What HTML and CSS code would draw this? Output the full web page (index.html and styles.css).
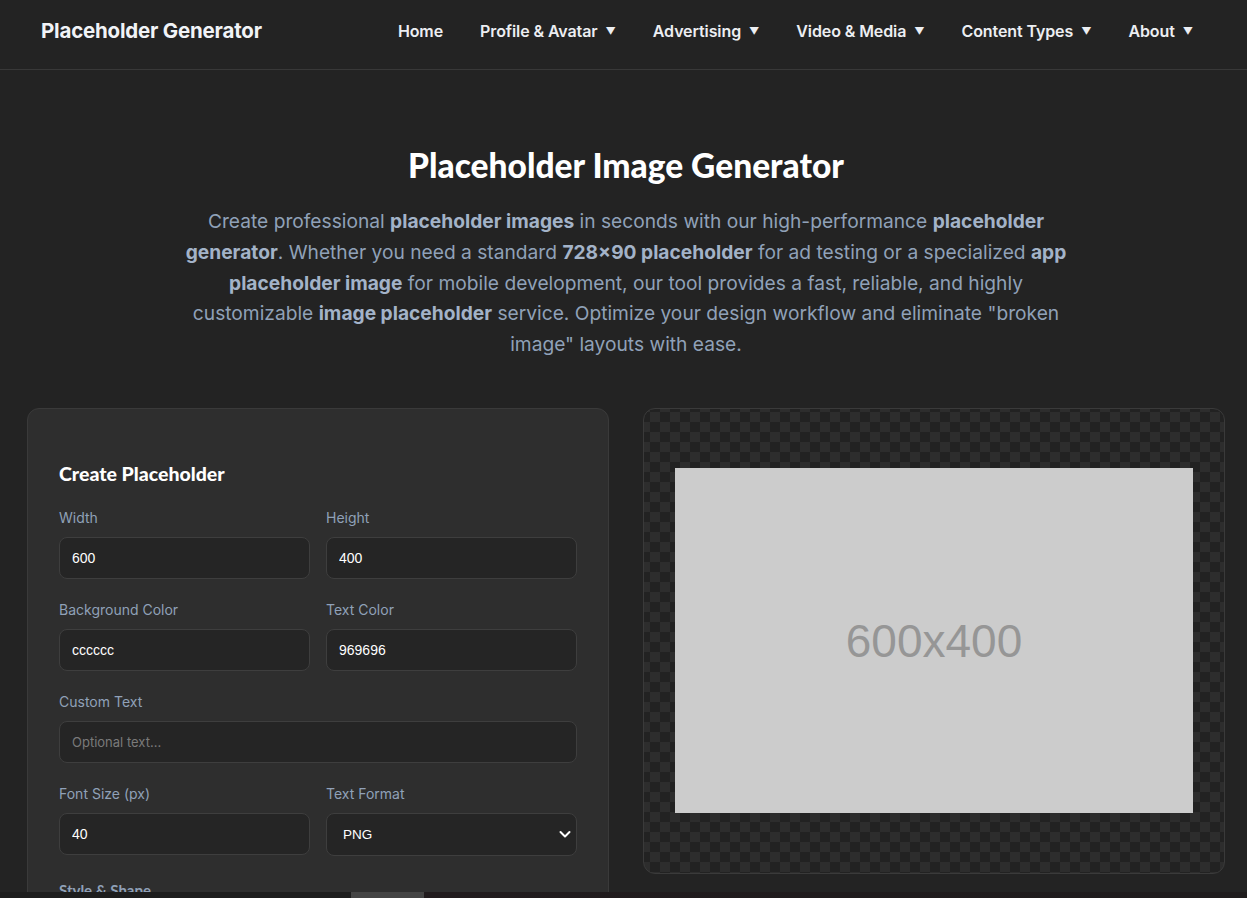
FILE: index.html
```html
<!DOCTYPE html>
<html lang="en">
<head>
<meta charset="utf-8">
<title>Placeholder Image Generator</title>
<link rel="stylesheet" href="styles.css">
</head>
<body>
<header class="site-header">
  <a class="logo" href="#">Placeholder Generator</a>
  <nav class="nav">
    <a class="nav-item" href="#">Home</a>
    <a class="nav-item" href="#">Profile &amp; Avatar <span class="caret">▼</span></a>
    <a class="nav-item" href="#">Advertising <span class="caret">▼</span></a>
    <a class="nav-item" href="#">Video &amp; Media <span class="caret">▼</span></a>
    <a class="nav-item" href="#">Content Types <span class="caret">▼</span></a>
    <a class="nav-item" href="#">About <span class="caret">▼</span></a>
  </nav>
</header>

<main class="main">
  <section class="hero">
    <h1 class="hero-title">Placeholder Image Generator</h1>
    <p class="hero-text">Create professional <strong>placeholder images</strong> in seconds with our high-performance <strong>placeholder generator</strong>. Whether you need a standard <strong>728×90 placeholder</strong> for ad testing or a specialized <strong>app placeholder image</strong> for mobile development, our tool provides a fast, reliable, and highly customizable <strong>image placeholder</strong> service. Optimize your design workflow and eliminate "broken image" layouts with ease.</p>
  </section>

  <section class="tool">
    <div class="card form-card">
      <h2 class="card-title">Create Placeholder</h2>
      <div class="row two">
        <div class="field">
          <label class="label">Width</label>
          <input class="input" type="text" value="600">
        </div>
        <div class="field">
          <label class="label">Height</label>
          <input class="input" type="text" value="400">
        </div>
      </div>
      <div class="row two">
        <div class="field">
          <label class="label">Background Color</label>
          <input class="input" type="text" value="cccccc">
        </div>
        <div class="field">
          <label class="label">Text Color</label>
          <input class="input" type="text" value="969696">
        </div>
      </div>
      <div class="row">
        <div class="field">
          <label class="label">Custom Text</label>
          <input class="input" type="text" placeholder="Optional text...">
        </div>
      </div>
      <div class="row two">
        <div class="field">
          <label class="label">Font Size (px)</label>
          <input class="input" type="text" value="40">
        </div>
        <div class="field">
          <label class="label">Text Format</label>
          <div class="select">
            <span>PNG</span>
            <svg class="chev" width="14" height="14" viewBox="0 0 14 14"><path d="M2.5 5l4.5 4.5L11.5 5" fill="none" stroke="#fff" stroke-width="2" stroke-linecap="round" stroke-linejoin="round"/></svg>
          </div>
        </div>
      </div>
      <h3 class="section-label">Style &amp; Shape</h3>
      <div class="row two">
        <div class="field">
          <label class="label">Border Radius</label>
          <input class="input" type="text" value="0">
        </div>
        <div class="field">
          <label class="label">Shape</label>
          <input class="input" type="text" value="Rectangle">
        </div>
      </div>
    </div>

    <div class="card preview-card">
      <div class="preview-img"><span>600x400</span></div>
    </div>
  </section>
</main>

<div class="bottom-bar"></div>
</body>
</html>
```

FILE: styles.css
```css
* { box-sizing: border-box; }
html, body { margin: 0; padding: 0; }
body {
  background: #232323;
  color: #e5e7eb;
  font-family: Inter, "Liberation Sans", sans-serif;
  overflow: hidden;
  height: 898px;
}
a { text-decoration: none; color: inherit; }

.site-header {
  height: 70px;
  border-bottom: 1px solid #383838;
  display: flex;
  align-items: center;
  justify-content: space-between;
  padding: 0 54px 8px 41px;
}
.logo {
  font-size: 20.5px;
  font-weight: 700;
  color: #f1f3f7;
  letter-spacing: -0.2px;
}
.nav {
  display: flex;
  align-items: center;
  gap: 37px;
}
.nav-item {
  font-size: 16px;
  font-weight: 600;
  color: #eceef2;
  display: flex;
  align-items: center;
  gap: 8px;
  letter-spacing: -0.1px;
}
.caret { font-size: 10px; }

.main { padding: 0 0 0 27px; }

.hero {
  text-align: center;
  padding-top: 75px;
  padding-right: 22px;
}
.hero-title {
  margin: 0;
  font-family: Lato, Inter, sans-serif;
  font-weight: 900;
  font-size: 33.5px;
  color: #ffffff;
  line-height: 40px;
}
.hero-text {
  max-width: 900px;
  margin: 21px auto 0;
  font-size: 19.2px;
  line-height: 30.8px;
  color: #90a1b8;
}
.hero-text strong { color: #a3b3c8; font-weight: 700; }

.tool {
  display: grid;
  grid-template-columns: 582px 582px;
  gap: 34px;
  margin-top: 48px;
  align-items: start;
}
.card {
  border: 1px solid #3a3a3a;
  border-radius: 12px;
}
.form-card {
  background: #2e2e2e;
  padding: 51px 31px 32px;
}
.card-title {
  margin: 0 0 20px;
  font-family: Lato, Inter, sans-serif;
  font-weight: 900;
  font-size: 19.5px;
  color: #ffffff;
  line-height: 28px;
}
.row { display: grid; gap: 16px; margin-bottom: 21px; }
.row.two { grid-template-columns: 1fr 1fr; }
.field { display: flex; flex-direction: column; }
.label {
  font-size: 14px;
  line-height: 20px;
  height: 20px;
  color: #90a1b8;
  margin-bottom: 9px;
}
.input, .select {
  height: 42px;
  background: #252525;
  border: 1px solid #3e3e3e;
  border-radius: 8px;
  padding: 0 12px;
  color: #ffffff;
  font-family: "Liberation Sans", Arial, sans-serif;
  font-size: 14px;
  outline: none;
  width: 100%;
}
.input::placeholder { color: #7a7a7a; font-family: Inter, sans-serif; font-size: 13px; }
.select {
  height: 43px;
  display: flex;
  align-items: center;
  justify-content: space-between;
  padding: 0 4px 0 16px;
  font-size: 13.5px;
}
.chev { display: block; }
.section-label {
  margin: 25px 0 16px;
  font-family: Lato, Inter, sans-serif;
  font-size: 15px;
  font-weight: 700;
  color: #90a1b8;
}

.preview-card {
  height: 466px;
  padding: 31px;
  display: flex;
  align-items: center;
  justify-content: center;
  background-color: #222222;
  background-image:
    linear-gradient(45deg, #2d2d2d 25%, transparent 25%, transparent 75%, #2d2d2d 75%),
    linear-gradient(45deg, #2d2d2d 25%, transparent 25%, transparent 75%, #2d2d2d 75%);
  background-size: 20px 20px;
  background-position: -4px 3px, 6px 13px;
}
.preview-img {
  width: 518px;
  height: 345px;
  flex: none;
  background: #cccccc;
  display: flex;
  align-items: center;
  justify-content: center;
}
.preview-img span {
  font-family: "Liberation Sans", Arial, sans-serif;
  font-size: 46px;
  color: #969696;
}

.bottom-bar {
  position: fixed;
  left: 0;
  right: 0;
  bottom: 0;
  height: 6px;
  background: linear-gradient(to right, #1d1d1d 0, #1d1d1d 351px, #444444 351px, #444444 424px, #211b1d 424px, #1f1c1d 100%);
}
```
